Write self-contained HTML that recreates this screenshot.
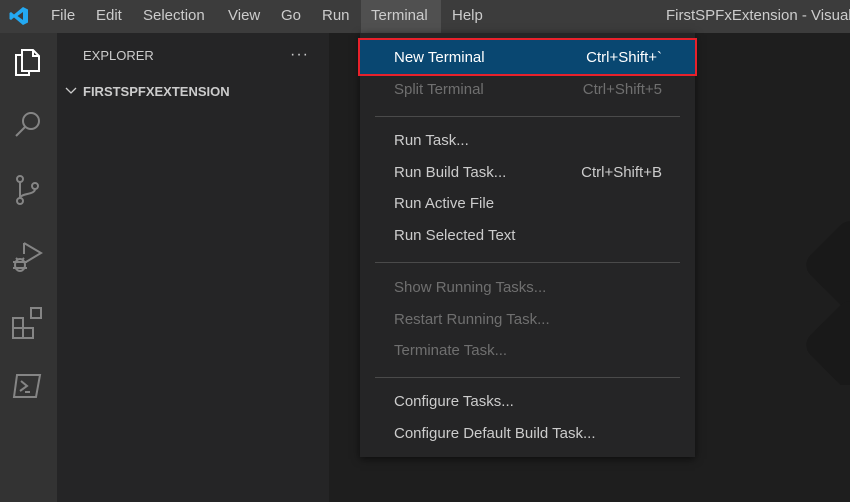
<!DOCTYPE html>
<html><head><meta charset="utf-8"><style>
*{margin:0;padding:0;box-sizing:border-box}
body{width:850px;height:502px;overflow:hidden;background:#1e1e1e;font-family:"Liberation Sans",sans-serif;position:relative}
.title{position:absolute;left:0;top:0;width:850px;height:33px;background:#3c3c3c;color:#ccc;font-size:15px;overflow:hidden}
.title span{position:absolute;top:7px;white-space:nowrap}
.act{position:absolute;left:0;top:33px;width:57px;height:469px;background:#333}
.side{position:absolute;left:57px;top:33px;width:272px;height:469px;background:#252526;color:#ccc}
.menu{position:absolute;left:360px;top:33px;width:335px;height:424px;background:#252526;box-shadow:0 2px 8px rgba(0,0,0,.6);color:#ccc;font-size:15px}
.it{position:absolute;left:34px;width:290px;white-space:nowrap}
.it b{font-weight:normal;position:absolute;right:22px;top:0}
.dis{color:#6f6f6f}
.sep{position:absolute;left:15px;width:305px;height:1px;background:#4a4a4a}
</style></head><body>
<div class="title">
<svg style="position:absolute;left:9px;top:6px" width="20" height="20" viewBox="0 0 20 20"><path d="M14 1 L19 3.5 V16.5 L14 19 L5 11.5 L2 14 L0.5 13 V7 L2 6 L5 8.5 Z M14 6 L8.5 10 L14 14 Z" fill="#23a9f2" fill-rule="evenodd"/></svg>
<span style="left:51px">File</span><span style="left:96px">Edit</span><span style="left:143px">Selection</span><span style="left:228px">View</span><span style="left:281px">Go</span><span style="left:322px">Run</span>
<div style="position:absolute;left:361px;top:0;width:80px;height:33px;background:#505050"></div>
<span style="left:371px">Terminal</span><span style="left:452px">Help</span>
<span style="left:666px">FirstSPFxExtension - Visual S</span>
</div>
<div class="act">
<svg style="position:absolute;left:13px;top:14px" width="30" height="34" viewBox="0 0 30 34" fill="none" stroke="#fff" stroke-width="2"><path d="M9 8 H3 V28 H16 V24"/><path d="M9 3 H20 L26 9 V24 H9 Z"/><path d="M20 3 V9 H26"/></svg>
<svg style="position:absolute;left:13px;top:77px" width="30" height="30" viewBox="0 0 30 30" fill="none" stroke="#858585" stroke-width="2"><circle cx="18" cy="11" r="8"/><path d="M12 17 L3 26"/></svg>
<svg style="position:absolute;left:13px;top:140px" width="30" height="34" viewBox="0 0 30 34" fill="none" stroke="#858585" stroke-width="2"><circle cx="7" cy="6" r="3"/><circle cx="7" cy="28" r="3"/><circle cx="22" cy="13" r="3"/><path d="M7 9 V25 M22 16 C22 22 8 20 7 25"/></svg>
<svg style="position:absolute;left:10px;top:207px" width="34" height="34" viewBox="0 0 34 34" fill="none" stroke="#858585" stroke-width="2"><path d="M14 3 L31 13 L16 22"/><path d="M14 3 V14"/><ellipse cx="10" cy="25" rx="5" ry="6"/><path d="M3 22 H17 M3 28 H17 M6 18 L8 20 M14 18 L12 20"/></svg>
<svg style="position:absolute;left:11px;top:273px" width="34" height="34" viewBox="0 0 34 34" fill="none" stroke="#858585" stroke-width="2"><rect x="2" y="12" width="10" height="10"/><rect x="2" y="22" width="10" height="10"/><rect x="12" y="22" width="10" height="10"/><rect x="20" y="2" width="10" height="10"/></svg>
<svg style="position:absolute;left:12px;top:340px" width="30" height="26" viewBox="0 0 30 26" fill="none" stroke="#858585" stroke-width="2"><path d="M5 2 H28 L24 24 H2 Z"/><path d="M9 8 L15 13 L8 18 M13 19 H18"/></svg>
</div>
<div class="side">
<div style="position:absolute;left:26px;top:15px;font-size:13px">EXPLORER</div>
<div style="position:absolute;left:233px;top:13px;font-size:16px;letter-spacing:1px">···</div>
<svg style="position:absolute;left:8px;top:54px" width="12" height="8" viewBox="0 0 12 8" fill="none" stroke="#ccc" stroke-width="1.3"><path d="M1 1 L6 6 L11 1"/></svg>
<div style="position:absolute;left:26px;top:51px;font-size:13px;font-weight:bold">FIRSTSPFXEXTENSION</div>
</div>
<svg style="position:absolute;left:805px;top:215px" width="60" height="170" viewBox="0 0 60 170"><rect x="10" y="15" width="70" height="70" rx="14" transform="rotate(45 45 50)" fill="#191919"/><rect x="10" y="95" width="70" height="70" rx="14" transform="rotate(45 45 130)" fill="#191919"/></svg>
<div class="menu">
<div style="position:absolute;left:-2px;top:5px;width:339px;height:38px;border:2px solid #e8212b;background:#094771"></div>
<div class="it" style="top:16px;color:#fff">New Terminal<b>Ctrl+Shift+`</b></div>
<div class="it dis" style="top:48px">Split Terminal<b>Ctrl+Shift+5</b></div>
<div class="sep" style="top:83px"></div>
<div class="it" style="top:99px">Run Task...</div>
<div class="it" style="top:131px">Run Build Task...<b>Ctrl+Shift+B</b></div>
<div class="it" style="top:162px">Run Active File</div>
<div class="it" style="top:194px">Run Selected Text</div>
<div class="sep" style="top:229px"></div>
<div class="it dis" style="top:246px">Show Running Tasks...</div>
<div class="it dis" style="top:278px">Restart Running Task...</div>
<div class="it dis" style="top:309px">Terminate Task...</div>
<div class="sep" style="top:344px"></div>
<div class="it" style="top:360px">Configure Tasks...</div>
<div class="it" style="top:392px">Configure Default Build Task...</div>
</div>
</body></html>
